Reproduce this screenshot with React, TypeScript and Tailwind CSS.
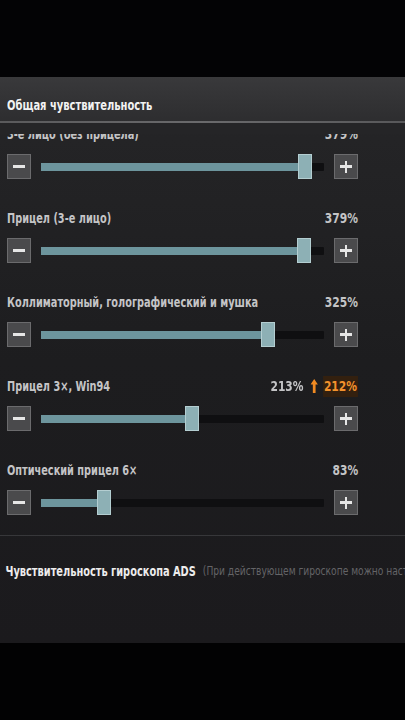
import React from 'react';

type Row = {
  label: string;
  value: string;
  pct: number; // thumb left edge, px from track start
  boost?: string;
};

const rows: Row[] = [
  { label: '3-е лицо (без прицела)', value: '379%', pct: 257 },
  { label: 'Прицел (3-е лицо)', value: '379%', pct: 256 },
  { label: 'Коллиматорный, голографический и мушка', value: '325%', pct: 220 },
  { label: 'Прицел 3×, Win94', value: '213%', pct: 144, boost: '212%' },
  { label: 'Оптический прицел 6×', value: '83%', pct: 56 },
];

const font = { fontFamily: '"DejaVu Sans Condensed", "DejaVu Sans", sans-serif' };

const StepButton = ({ plus }: { plus?: boolean }) => (
  <button className="relative w-[24px] h-[25px] shrink-0 bg-[#4a4a4c] border border-[#6b6b6d] flex items-center justify-center">
    <span className="absolute w-[12px] h-[3px] bg-[#e6e6e6]" />
    {plus && <span className="absolute w-[2px] h-[12px] bg-[#e6e6e6]" />}
  </button>
);

const Slider = ({ pct }: { pct: number }) => (
  <div className="relative w-[283px] h-[25px] mx-[10px] flex items-center">
    <div className="w-full h-[8px] bg-[#0f0f11] rounded-[1px]" />
    <div className="absolute left-0 h-[8px] bg-[#6d959d]" style={{ width: pct + 4 }} />
    <div
      className="absolute top-0 w-[14px] h-[25px] bg-[#8db0b5] border border-[#b4ced1]"
      style={{ left: pct }}
    />
  </div>
);

const SettingRow = ({ row }: { row: Row }) => (
  <div className="flex flex-col gap-[12px]">
    <div className="h-[16px] flex items-center pl-[7px] pr-[47px] text-[14px] font-bold text-[#c4c4c6] whitespace-nowrap">
      <div className="flex-1 min-w-0">
        <span className="inline-block origin-left scale-x-[0.775]">{row.label}</span>
      </div>
      <div className="flex items-center shrink-0 origin-right scale-x-[0.85]">
        <span>{row.value}</span>
        {row.boost && (
          <>
            <svg width="9" height="14" viewBox="0 0 8 13" className="ml-[8px] mr-[6px]">
              <path d="M4 0 L8 5 H5.5 V13 H2.5 V5 H0 Z" fill="#f08a22" />
            </svg>
            <span className="text-[#f3922d] bg-[#33200f] px-[1px]">{row.boost}</span>
          </>
        )}
      </div>
    </div>
    <div className="flex items-center pl-[7px]">
      <StepButton />
      <Slider pct={row.pct} />
      <StepButton plus />
    </div>
  </div>
);

export default function App() {
  return (
    <div className="w-[405px] h-[720px] bg-black flex flex-col overflow-hidden" style={font}>
      <div className="h-[77px] shrink-0 bg-[#030305]" />

      <div className="h-[566px] shrink-0 flex flex-col bg-gradient-to-b from-[#262628] via-[#1d1d1f] to-[#1b1a1d] overflow-hidden">
        {/* header */}
        <div className="h-[57px] shrink-0 flex flex-col bg-gradient-to-b from-[#39393b] to-[#2a2a2c]">
          <div className="h-[44px] flex items-end pl-[7px] pb-[5px]">
            <span className="text-[14px] font-bold text-[#f2f2f2] origin-left scale-x-[0.79] whitespace-nowrap">
              Общая чувствительность
            </span>
          </div>
          <div className="h-[2px] bg-gradient-to-r from-[#5a5a5c] via-[#6a6a6c] to-[#58585a]" />
          <div className="flex-1 bg-[#252527]" />
        </div>

        {/* scrolled list */}
        <div className="h-[402px] shrink-0 overflow-hidden flex flex-col">
          <div className="-mt-[8px] flex flex-col gap-[31px]">
            {rows.map((r) => (
              <SettingRow key={r.label} row={r} />
            ))}
          </div>
          <div className="mt-auto h-[1px] bg-[#37373a]" />
        </div>

        {/* gyroscope section */}
        <div className="mt-[27px] pl-[7px] h-[16px] flex items-center whitespace-nowrap origin-left scale-x-[0.78]">
          <span className="text-[14px] font-bold text-[#ececec]">Чувствительность гироскопа ADS</span>
          <span className="ml-[9px] text-[13px] text-[#646467]">
            (При действующем гироскопе можно настроить чувствительность)
          </span>
        </div>
      </div>

      <div className="flex-1 bg-[#020203]" />
    </div>
  );
}
